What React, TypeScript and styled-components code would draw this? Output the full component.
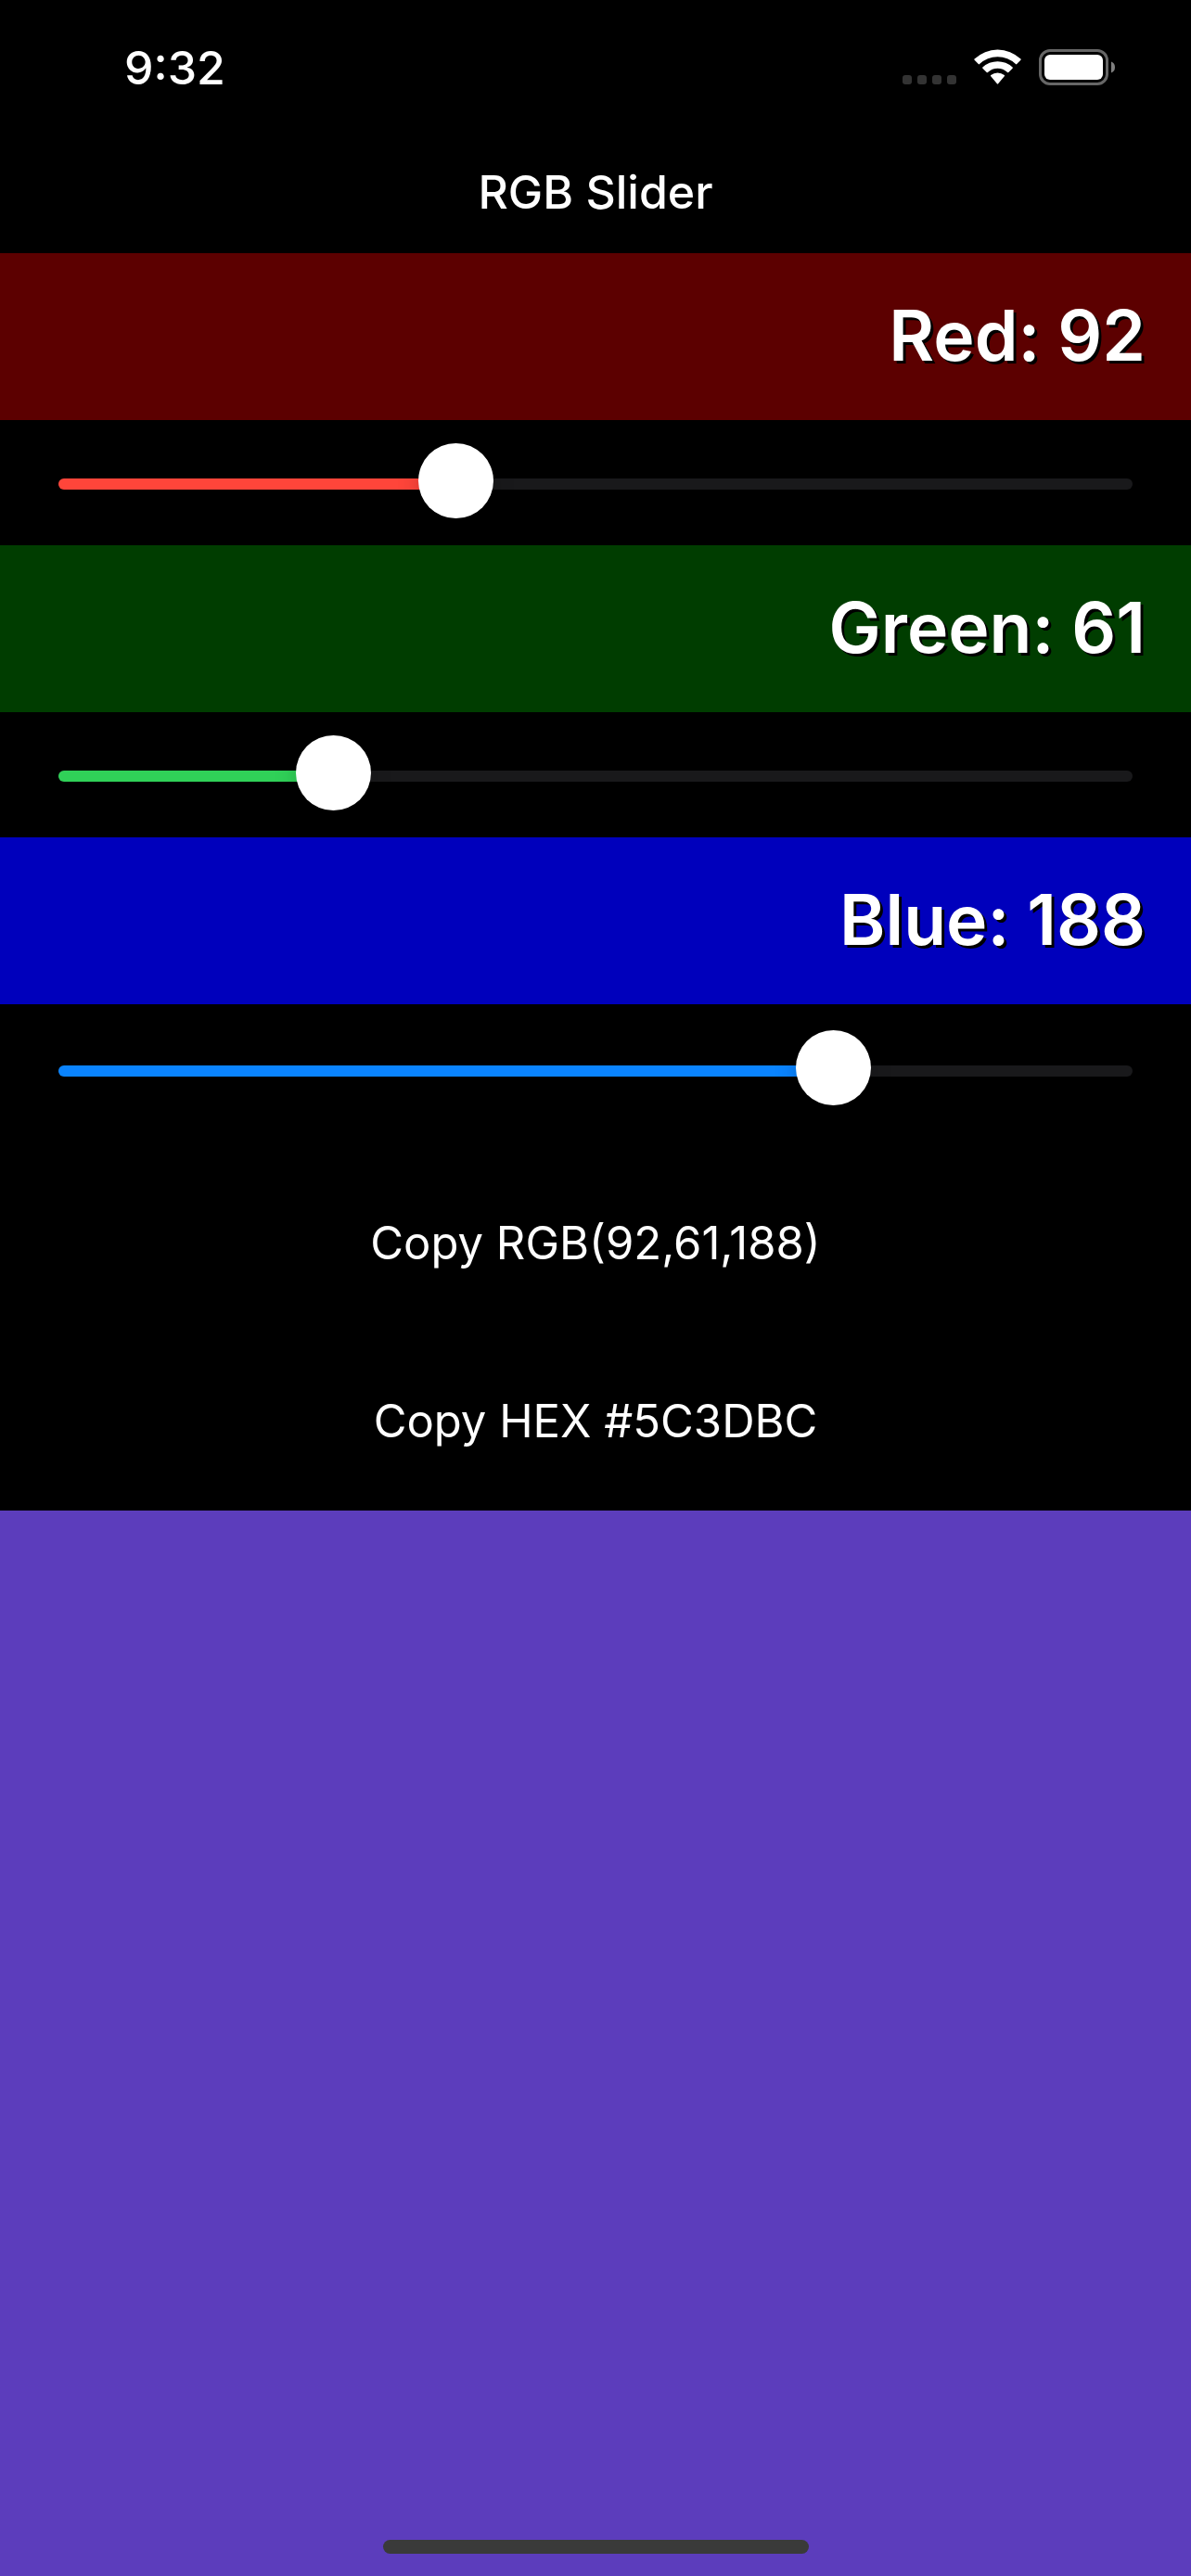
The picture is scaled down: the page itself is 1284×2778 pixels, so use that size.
import { useState } from "react";
import styled, { createGlobalStyle } from "styled-components";

const GlobalStyle = createGlobalStyle`
  *, *::before, *::after { box-sizing: border-box; }
  body {
    margin: 0;
    background: #000;
    color: #fff;
    font-family: Inter, "Liberation Sans", sans-serif;
  }
`;

const Screen = styled.div`
  min-height: 100vh;
  display: flex;
  flex-direction: column;
`;

const StatusBar = styled.div`
  height: 141px;
  display: flex;
  align-items: center;
  justify-content: space-between;
  padding: 4px 82px 0 134px;
`;

const Time = styled.span`
  font-size: 50px;
  line-height: 60px;
  font-weight: 500;
`;

const StatusIcons = styled.div`
  display: flex;
  align-items: center;
  gap: 19px;

  svg { display: block; }
`;

const NavBar = styled.header`
  height: 132px;
  display: flex;
  align-items: center;
  justify-content: center;
`;

const Title = styled.h1`
  margin: 0;
  font-size: 50px;
  line-height: 60px;
  font-weight: 500;
`;

const Band = styled.div<{ $color: string }>`
  display: flex;
  align-items: center;
  justify-content: flex-end;
  height: 180px;
  padding: 0 49px 2px;
  background: ${(p) => p.$color};
`;

const BandLabel = styled.label`
  font-size: 75px;
  line-height: 90px;
  font-weight: 600;
  text-shadow: 3px 3px 0 #000;
`;

const SliderRow = styled.div<{ $last: boolean }>`
  display: grid;
  padding: ${(p) => (p.$last ? "28px 60px 53px" : "25px 60px 29px")};

  & > * { grid-area: 1 / 1; }
`;

const Track = styled.div`
  height: 12px;
  margin: 38px 3px 0;
  border-radius: 6px;
  background: #19191b;
  overflow: hidden;
`;

const Fill = styled.div<{ $color: string }>`
  height: 100%;
  background: ${(p) => p.$color};
`;

const Range = styled.input`
  appearance: none;
  width: 100%;
  height: 81px;
  margin: 0;
  background: transparent;
  cursor: pointer;
  z-index: 1;

  &::-webkit-slider-runnable-track {
    height: 81px;
    background: transparent;
  }

  &::-webkit-slider-thumb {
    appearance: none;
    width: 81px;
    height: 81px;
    border: 0;
    border-radius: 50%;
    background: #fff;
    box-shadow: 0 6px 24px rgba(0, 0, 0, 0.2);
  }
`;

const CopyButton = styled.button`
  height: 192px;
  border: 0;
  padding: 0;
  background: transparent;
  color: #fff;
  font-family: inherit;
  font-size: 49px;
  line-height: 60px;
  font-weight: 400;
  cursor: pointer;
`;

const Preview = styled.div`
  flex: 1;
  display: flex;
  align-items: flex-end;
  justify-content: center;
  padding-bottom: 24px;
`;

const HomeIndicator = styled.div`
  width: 459px;
  height: 15px;
  border-radius: 8px;
  background: #3a3a3a;
`;

const SignalIcon = () => (
  <svg width="58" height="39" viewBox="0 0 58 39" aria-hidden="true">
    {[0, 16, 32, 48].map((x) => (
      <rect key={x} x={x} y="28" width="10" height="10" rx="3" fill="#333" />
    ))}
  </svg>
);

const WifiIcon = () => (
  <svg width="51" height="39" viewBox="0 0 51 39" fill="#fff" aria-hidden="true">
    <path d="M.6 10.6A36 36 0 0 1 50.4 10.6Q51 11.2 50.4 11.8L46.2 16.1Q45.6 16.7 45 16.1A28.2 28.2 0 0 0 6 16.1Q5.4 16.7 4.8 16.1L.6 11.8Q0 11.2 .6 10.6Z" />
    <path d="M9.4 19.6A23.4 23.4 0 0 1 41.6 19.6Q42.2 20.2 41.6 20.8L37.3 25Q36.7 25.6 36.1 25A15.4 15.4 0 0 0 14.9 25Q14.3 25.6 13.7 25L9.4 20.8Q8.8 20.2 9.4 19.6Z" />
    <path d="M18.2 29.3Q17.6 28.7 18.2 28.1A11.4 11.4 0 0 1 32.8 28.1Q33.4 28.7 32.8 29.3L26.1 37.3Q25.5 38 24.9 37.3Z" />
  </svg>
);

const BatteryIcon = () => (
  <svg width="82" height="39" viewBox="0 0 82 39" aria-hidden="true">
    <rect x="1.5" y="1.5" width="72" height="36" rx="10.5" fill="none" stroke="#666" strokeWidth="3" />
    <rect x="6" y="6" width="63" height="27" rx="6" fill="#fff" />
    <path d="M78 13.5Q82 15 82 19.5Q82 24 78 25.5Z" fill="#808080" />
  </svg>
);

type Channel = "red" | "green" | "blue";

const CHANNELS: { key: Channel; name: string; tint: string; band: (v: number) => string }[] = [
  { key: "red", name: "Red", tint: "#ff453a", band: (v) => `rgb(${v}, 0, 0)` },
  { key: "green", name: "Green", tint: "#30d158", band: (v) => `rgb(0, ${v}, 0)` },
  { key: "blue", name: "Blue", tint: "#0a84ff", band: (v) => `rgb(0, 0, ${v})` },
];

const toHex = (v: number) => v.toString(16).padStart(2, "0").toUpperCase();

export default function App() {
  const [color, setColor] = useState<Record<Channel, number>>({ red: 92, green: 61, blue: 188 });

  const rgb = `RGB(${color.red},${color.green},${color.blue})`;
  const hex = `#${toHex(color.red)}${toHex(color.green)}${toHex(color.blue)}`;
  const copy = (text: string) => navigator.clipboard?.writeText(text);

  return (
    <Screen>
      <GlobalStyle />
      <StatusBar>
        <Time>9:32</Time>
        <StatusIcons>
          <SignalIcon />
          <WifiIcon />
          <BatteryIcon />
        </StatusIcons>
      </StatusBar>
      <NavBar>
        <Title>RGB Slider</Title>
      </NavBar>
      {CHANNELS.map(({ key, name, tint, band }) => (
        <div key={key}>
          <Band $color={band(color[key])}>
            <BandLabel htmlFor={key}>{`${name}: ${color[key]}`}</BandLabel>
          </Band>
          <SliderRow $last={key === "blue"}>
            <Track>
              <Fill $color={tint} style={{ width: `${(color[key] / 255) * 100}%` }} />
            </Track>
            <Range
              id={key}
              type="range"
              min={0}
              max={255}
              value={color[key]}
              onChange={(e) => setColor({ ...color, [key]: Number(e.target.value) })}
            />
          </SliderRow>
        </div>
      ))}
      <CopyButton type="button" onClick={() => copy(rgb)}>{`Copy ${rgb}`}</CopyButton>
      <CopyButton type="button" onClick={() => copy(hex)}>{`Copy HEX ${hex}`}</CopyButton>
      <Preview style={{ background: hex }}>
        <HomeIndicator />
      </Preview>
    </Screen>
  );
}
